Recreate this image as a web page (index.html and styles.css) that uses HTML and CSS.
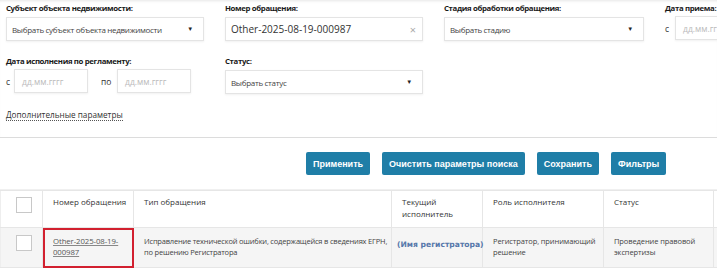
FILE: index.html
```html
<!DOCTYPE html>
<html lang="ru">
<head>
  <meta charset="UTF-8">
  <title>Поиск обращений</title>
  <link rel="stylesheet" href="styles.css">
</head>
<body>
  <div class="search-panel">
    <div class="filters">
      <div class="field">
        <label>Субъект объекта недвижимости:</label>
        <div class="box select">Выбрать субъект объекта недвижимости<span class="arrow">▼</span></div>
      </div>
      <div class="field">
        <label>Номер обращения:</label>
        <div class="box value">Other-2025-08-19-000987<span class="clear">×</span></div>
      </div>
      <div class="field">
        <label>Стадия обработки обращения:</label>
        <div class="box select">Выбрать стадию<span class="arrow">▼</span></div>
      </div>
      <div class="field">
        <label>Дата приема:</label>
        <div class="dates">
          <span>с</span>
          <div class="box date wide">дд.мм.гггг</div>
        </div>
      </div>

      <div class="field">
        <label>Дата исполнения по регламенту:</label>
        <div class="dates">
          <span>с</span>
          <div class="box date">дд.мм.гггг</div>
          <span class="po">по</span>
          <div class="box date">дд.мм.гггг</div>
        </div>
      </div>
      <div class="field">
        <label>Статус:</label>
        <div class="box select">Выбрать статус<span class="arrow">▼</span></div>
      </div>
    </div>

    <a class="more" href="#">Дополнительные параметры</a>
  </div>

  <div class="actions">
    <button>Применить</button>
    <button>Очистить параметры поиска</button>
    <button>Сохранить</button>
    <button>Фильтры</button>
  </div>

  <table class="results">
    <thead>
      <tr>
        <th class="check"><span class="checkbox"></span></th>
        <th class="c-num">Номер обращения</th>
        <th class="c-type">Тип обращения</th>
        <th class="c-exec">Текущий исполнитель</th>
        <th class="c-role">Роль исполнителя</th>
        <th class="c-status">Статус</th>
        <th class="c-rest"></th>
      </tr>
    </thead>
    <tbody>
      <tr>
        <td class="check"><span class="checkbox"></span></td>
        <td class="c-num marked"><a href="#">Other-2025-08-19-<br>000987</a></td>
        <td class="type">Исправление технической ошибки, содержащейся в сведениях ЕГРН, по решению Регистратора</td>
        <td class="executor">(Имя регистратора)</td>
        <td>Регистратор, принимающий решение</td>
        <td>Проведение правовой экспертизы</td>
        <td></td>
      </tr>
    </tbody>
  </table>
</body>
</html>
```

FILE: styles.css
```css
body {
  margin: 0;
  width: 717px;
  height: 270px;
  overflow: hidden;
  font-family: "Open Sans", "Liberation Sans", sans-serif;
  color: #333;
  background: #fff;
}

.search-panel {
  padding: 3px 0 0 6px;
  border-bottom: 1px solid #dcdcdc;
  height: 138px;
  box-sizing: border-box;
  box-shadow: inset 0 3px 3px -2px rgba(0,0,0,0.1);
}

.filters {
  display: grid;
  grid-template-columns: 198px 198px 200px 53px;
  column-gap: 21px;
  row-gap: 15px;
}

.field label {
  display: block;
  font-size: 7.8px;
  font-weight: 700;
  letter-spacing: -0.35px;
  color: #1a1a1a;
  height: 14px;
  line-height: 10px;
  white-space: nowrap;
}

.box {
  height: 24px;
  box-sizing: border-box;
  border: 1px solid #e4e4e4;
  box-shadow: 0 1px 2px rgba(0,0,0,0.06);
  display: flex;
  align-items: center;
  justify-content: space-between;
  padding: 0 10px 0 5px;
  font-size: 8px;
  letter-spacing: -0.3px;
  color: #444;
  white-space: nowrap;
}

.box.value {
  color: #333;
  font-size: 10px;
  letter-spacing: 0;
  padding-right: 6px;
}

.arrow {
  font-size: 6px;
  color: #222;
}

.clear {
  font-size: 11px;
  color: #aaa;
}

.dates {
  display: flex;
  align-items: center;
  font-size: 8.5px;
  color: #333;
  margin-top: -1px;
}

.dates span {
  width: 8px;
  flex-shrink: 0;
}

.dates .po {
  width: 16px;
  margin-left: 13px;
}

.box.date {
  width: 74px;
  flex-shrink: 0;
  color: #bbb;
  font-size: 8.5px;
  letter-spacing: 0;
  padding-left: 7px;
  overflow: hidden;
}

.box.date.wide {
  width: 43px;
  margin-left: 2px;
  padding-right: 0;
  justify-content: flex-start;
}

.more {
  display: inline-block;
  margin-top: 16px;
  font-size: 8.2px;
  color: #333;
  text-decoration: none;
  border-bottom: 1px dotted #555;
  line-height: 10px;
}

.actions {
  display: flex;
  gap: 12px;
  padding: 14px 0 0 306px;
  height: 52px;
  box-sizing: border-box;
  border-bottom: 1px solid #f0f0f0;
}

.actions button {
  height: 23px;
  padding: 0 7px;
  border: none;
  border-radius: 2px;
  background-color: #1f7ea7;
  color: #fff;
  font-family: "Liberation Sans", sans-serif;
  font-weight: 700;
  font-size: 9px;
}

.results {
  border-collapse: collapse;
  table-layout: fixed;
  width: 740px;
  font-size: 7.5px;
  letter-spacing: -0.1px;
  color: #444;
}

.results th,
.results td {
  border: 1px solid #e6e6e6;
  text-align: left;
  vertical-align: top;
  padding: 5px 4px 0 10px;
  line-height: 11px;
}

.results th {
  height: 30px;
  font-size: 8px;
  letter-spacing: 0;
  line-height: 12px;
  font-weight: 400;
  color: #333;
}

.results td {
  height: 28px;
  background: #f5f5f5;
  padding-top: 8px;
}

.results .type {
  padding-right: 0;
  letter-spacing: -0.2px;
}

.results th.check {
  padding-top: 6px;
}

.results .check {
  width: 26px;
  padding: 7px 0 0 15px;
  border-left-color: #eee;
}

.checkbox {
  display: block;
  width: 14px;
  height: 14px;
  border: 1px solid #c8c8c8;
  background: #fff;
}

.c-num { width: 76px; }
.c-type { width: 243px; }
.c-exec { width: 76px; }
.c-role { width: 106px; }
.c-status { width: 95px; }

.results .marked {
  outline: 2px solid #d2202f;
  outline-offset: -2px;
}

.marked a {
  color: #555;
  font-size: 7.8px;
  text-decoration: underline;
  text-decoration-color: #888;
}

.results .executor {
  font-family: "DejaVu Sans", sans-serif;
  font-weight: 700;
  color: #5577aa;
  font-size: 7.6px;
  letter-spacing: 0;
  padding: 11px 0 0 5px;
  white-space: nowrap;
}
```
